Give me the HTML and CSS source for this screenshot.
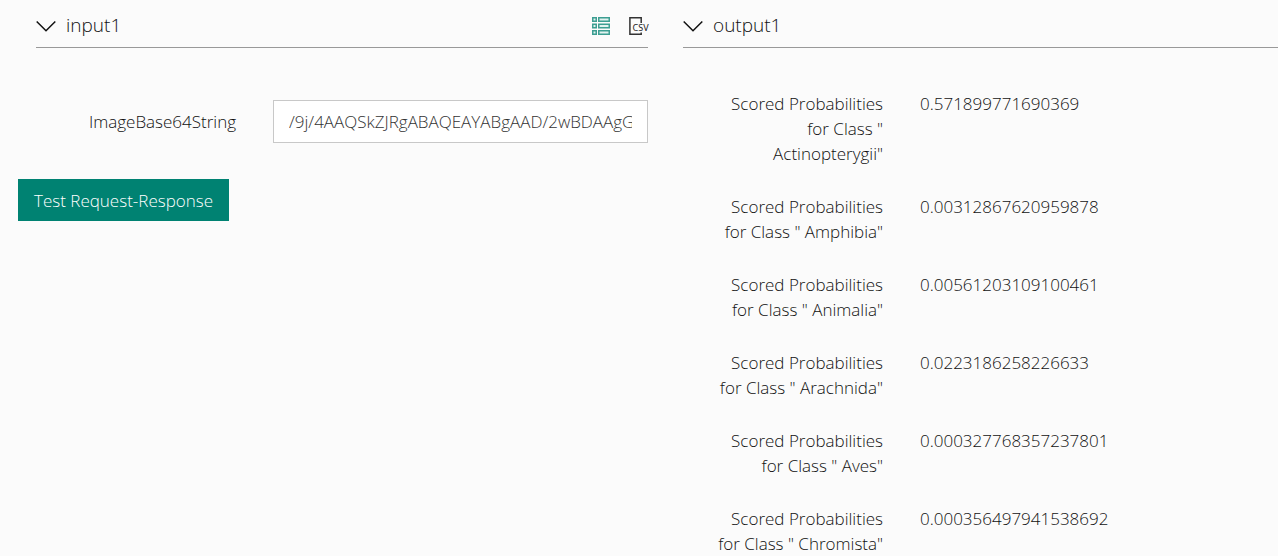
FILE: index.html
```
<!DOCTYPE html>
<html lang="en">
<head>
<meta charset="utf-8">
<title>Test Request-Response</title>
<link rel="stylesheet" href="styles.css">
</head>
<body>
<main class="panels">
  <form class="panel">
    <section class="section">
      <header class="section-header">
        <button class="toggle" type="button" aria-expanded="true">
          <svg class="chevron" viewBox="0 0 20 12" aria-hidden="true"><path d="M.7 1.5 10 10.8 19.3 1.5"/></svg>
          <span>input1</span>
        </button>
        <div class="tools">
          <button class="tool" type="button" aria-label="Form view">
            <svg class="icon icon-form" viewBox="0 0 18 18" aria-hidden="true"><path d="M.75.75h3.5v3.5H.75zM6.75.75h10.5v3.5H6.75zM.75 7.25h3.5v3.5H.75zM6.75 7.25h10.5v3.5H6.75zM.75 13.75h3.5v3.5H.75zM6.75 13.75h10.5v3.5H6.75z"/></svg>
          </button>
          <button class="tool" type="button" aria-label="CSV view">
            <svg class="icon icon-csv" viewBox="0 0 18 18" aria-hidden="true"><path d="M12.2 6V.8H.9v16.4h11.3v-1.7"/><text x="3.6" y="14.2">CSV</text></svg>
          </button>
        </div>
      </header>
      <div class="field">
        <label class="label" for="image">ImageBase64String</label>
        <input class="text-box" id="image" type="text" value="/9j/4AAQSkZJRgABAQEAYABgAAD/2wBDAAgGBgcGBQgHBwcJCQgKDBQNDAsLDBkSEw8UHRofHh0aHBwgJC4nICIsIxwcKDcpLDAxNDQ0">
      </div>
    </section>
    <button class="submit" type="button">Test Request-Response</button>
  </form>
  <section class="panel">
    <header class="section-header">
      <button class="toggle" type="button" aria-expanded="true">
        <svg class="chevron" viewBox="0 0 20 12" aria-hidden="true"><path d="M.7 1.5 10 10.8 19.3 1.5"/></svg>
        <span>output1</span>
      </button>
    </header>
    <dl class="results">
      <div class="result"><dt class="label">Scored Probabilities for Class " Actinopterygii"</dt><dd>0.571899771690369</dd></div>
      <div class="result"><dt class="label">Scored Probabilities for Class " Amphibia"</dt><dd>0.00312867620959878</dd></div>
      <div class="result"><dt class="label">Scored Probabilities for Class " Animalia"</dt><dd>0.00561203109100461</dd></div>
      <div class="result"><dt class="label">Scored Probabilities for Class " Arachnida"</dt><dd>0.0223186258226633</dd></div>
      <div class="result"><dt class="label">Scored Probabilities for Class " Aves"</dt><dd>0.000327768357237801</dd></div>
      <div class="result"><dt class="label">Scored Probabilities for Class " Chromista"</dt><dd>0.000356497941538692</dd></div>
    </dl>
  </section>
</main>
</body>
</html>
```
FILE: styles.css
```
* { box-sizing: border-box; }

body {
  margin: 0;
  background: #fbfbfb;
  color: #111;
  font: 300 17px/25px "Segoe UI", "Open Sans", "Noto Sans", sans-serif;
}

button, input { font: inherit; }

.panels {
  display: grid;
  grid-template-columns: 630fr 595fr;
  gap: 35px;
  padding-left: 18px;
}

.panel { min-width: 0; }

.section { padding-left: 18px; }

.section-header {
  display: flex;
  align-items: center;
  justify-content: space-between;
  height: 48px;
  padding-top: 4px;
  border-bottom: 1px solid #999;
}

.toggle {
  display: flex;
  align-items: center;
  gap: 10px;
  padding: 0;
  border: 0;
  background: none;
  color: #111;
  font-size: 19px;
}

.chevron {
  width: 20px;
  height: 12px;
  fill: none;
  stroke: #111;
  stroke-width: 1.5;
}

.tools {
  display: flex;
  gap: 19px;
  padding-right: 1px;
}

.tool {
  display: flex;
  padding: 0;
  border: 0;
  background: none;
}

.icon {
  width: 18px;
  height: 18px;
  fill: none;
  stroke-width: 1.5;
  overflow: visible;
}

.icon-form { fill: #e1f2ef; stroke: #3d9e92; }
.icon-csv { stroke: #333; }

.icon-csv text {
  fill: #222;
  stroke: none;
  font: 400 9px "Noto Sans", sans-serif;
}

.field, .result {
  display: grid;
  grid-template-columns: 200px 1fr;
  gap: 37px;
}

.field {
  align-items: center;
  margin-top: 52px;
}

.label {
  padding-left: 26px;
  text-align: right;
}

.text-box {
  width: 100%;
  min-width: 0;
  height: 43px;
  padding: 0 15px;
  border: 1px solid #c8c8c8;
  border-radius: 0;
  background: #fff;
  color: #333;
}

.submit {
  height: 42px;
  margin-top: 36px;
  padding: 0 16px;
  border: 0;
  background: #008272;
  color: #fff;
}

.results {
  display: grid;
  gap: 28px;
  margin: 43px 0 0;
}

.results dd { margin: 0; }
```
